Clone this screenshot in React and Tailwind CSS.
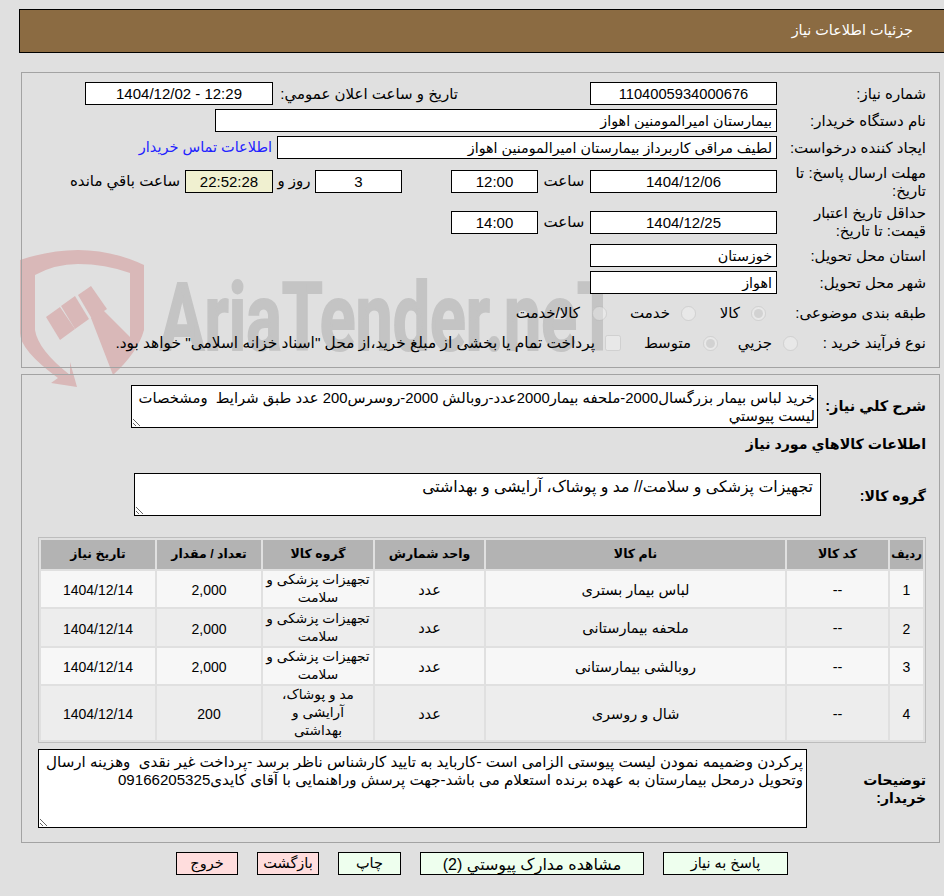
import React from 'react';

const desc = 'خريد لباس بيمار بزرگسال2000-ملحفه بيمار2000عدد-روبالش 2000-روسرس200 عدد طبق شرايط  ومشخصات ليست پيوستي';
const group = 'تجهیزات پزشکی و سلامت// مد و پوشاک، آرایشی و بهداشتی';
const notes = 'پرکردن وضمیمه نمودن لیست پیوستی الزامی است -کارباید به تایید کارشناس ناظر برسد -پرداخت غیر نقدی  وهزینه ارسال وتحویل درمحل بیمارستان به عهده برنده استعلام می باشد-جهت پرسش وراهنمایی با آقای کایدی09166205325';

const items = [
  { id: 1, name: 'لباس بیمار بستری', group: 'تجهیزات پزشکی و\nسلامت', qty: '2,000', h: 'h-[36px]' },
  { id: 2, name: 'ملحفه بیمارستانی', group: 'تجهیزات پزشکی و\nسلامت', qty: '2,000', h: 'h-[37px]' },
  { id: 3, name: 'روبالشی بیمارستانی', group: 'تجهیزات پزشکی و\nسلامت', qty: '2,000', h: 'h-[36px]' },
  { id: 4, name: 'شال و روسری', group: 'مد و پوشاک،\nآرایشی و\nبهداشتی', qty: '200', h: 'h-[54px]' },
];

const Label = ({ children }) => (
  <div className="w-[149px] flex-none pl-2 leading-[18px]">{children}</div>
);

const Field = ({ value, className = 'w-[187px]', center = true, mono = true }) => (
  <input
    readOnly
    value={value}
    className={`h-[23px] flex-none border border-black bg-white px-1 outline-none ${center ? 'text-center' : 'text-right'} ${mono ? 'text-[15px]' : 'text-[14.3px]'} ${className}`}
  />
);

const Radio = ({ checked }) => (
  <input type="radio" disabled checked={!!checked} readOnly className="m-0 h-[15px] w-[15px] flex-none opacity-60" />
);

const Button = ({ children, className }) => (
  <button className={`h-[23px] flex-none border border-black ${className}`}>{children}</button>
);

const Watermark = () => (
  <svg className="absolute left-0 top-0 pointer-events-none [direction:ltr]" width="944" height="896" viewBox="0 0 944 896">
    <path
      fill="#d9b8b8"
      fillRule="evenodd"
      d="M20 260 Q50 250 78 250 Q112 250 144 265 L144 330 Q138 352 113 375 L91 318 L103 310 L130 337 L130 273 Q105 264 78 264 Q55 264 35 275 L35 330 Q38 350 70 375 L70 362 L77 387 L51 383 L58 378 Q20 350 20 333 Z"
    />
    <polygon fill="#d9b8b8" points="46,317 60,307 75,329 60,340" />
    <polygon fill="#d9b8b8" points="61,306 75,296 89,319 75,329" />
    <polygon fill="#d9b8b8" points="78,295 91,286 107,309 92,319" />
    <text
      x="160"
      y="350"
      textLength="458"
      lengthAdjust="spacingAndGlyphs"
      fontFamily="Roboto, sans-serif"
      fontWeight="700"
      fontSize="95"
      fill="#c4c4c4"
      stroke="#c4c4c4"
      strokeWidth="2"
    >
      AriaTender.neT
    </text>
  </svg>
);

const App = () => {
  return (
    <div dir="rtl" className="relative h-[896px] w-[944px] overflow-hidden bg-[#e0e0e0] font-['Liberation_Sans','DejaVu_Sans',sans-serif] text-[15px] text-black">
      <Watermark />

      <div className="relative">
        {/* Header */}
        <div className="ml-[19px] mt-[9px] flex h-[44px] items-center border border-r-0 border-black bg-[#8b6b42] pr-[31px] text-[14.4px] text-white">
          جزئیات اطلاعات نیاز
        </div>

        {/* Need details */}
        <div className="ml-[21px] mr-[4px] mt-[19px] h-[296px] border border-[#a3a3a3] pr-[13px] pt-[9px]">
          <div className="flex h-[27px] items-start">
            <div className="w-[149px] flex-none leading-[23px]">شماره نیاز:</div>
            <Field value="1104005934000676" className="w-[187px] !text-[14.7px]" />
            <div className="mr-[132px] w-[181px] flex-none leading-[23px]">تاريخ و ساعت اعلان عمومي:</div>
            <Field value="12:29 - 1404/12/02" className="mr-[4px] w-[188px]" />
          </div>
          <div className="flex h-[27px] items-start">
            <div className="w-[149px] flex-none leading-[23px]">نام دستگاه خریدار:</div>
            <Field value="بیمارستان امیرالمومنین اهواز" center={false} mono={false} className="w-[562px]" />
          </div>
          <div className="flex h-[27px] items-start">
            <div className="w-[149px] flex-none leading-[23px]">ایجاد کننده درخواست:</div>
            <Field value="لطیف مراقی کاربرداز بیمارستان امیرالمومنین اهواز" center={false} mono={false} className="w-[500px]" />
            <a className="mr-[5px] text-[14.5px] leading-[23px] text-[#2222ff]">اطلاعات تماس خریدار</a>
          </div>
          <div className="flex h-[37px] items-center">
            <Label>مهلت ارسال پاسخ: تا تاریخ:</Label>
            <Field value="1404/12/06" />
            <div className="w-[52px] flex-none text-center">ساعت</div>
            <Field value="12:00" className="w-[87px]" />
            <Field value="3" className="mr-[49px] w-[87px]" />
            <div className="w-[42px] flex-none text-center">روز و</div>
            <Field value="22:52:28" className="w-[88px] !bg-[#f0f0d0]" />
            <div className="mr-[5px] flex-none">ساعت باقي مانده</div>
          </div>
          <div className="flex h-[44px] items-center">
            <Label>حداقل تاریخ اعتبار قیمت: تا تاریخ:</Label>
            <Field value="1404/12/25" />
            <div className="w-[52px] flex-none text-center">ساعت</div>
            <Field value="14:00" className="w-[87px]" />
          </div>
          <div className="flex h-[27px] items-start">
            <div className="w-[149px] flex-none leading-[23px]">استان محل تحویل:</div>
            <Field value="خوزستان" center={false} mono={false} />
          </div>
          <div className="flex h-[27px] items-start">
            <div className="w-[149px] flex-none leading-[23px]">شهر محل تحویل:</div>
            <Field value="اهواز" center={false} mono={false} />
          </div>
          <div className="flex h-[30px] items-center">
            <div className="w-[160px] flex-none">طبقه بندی موضوعی:</div>
            <Radio checked />
            <div className="mr-[11px] w-[44px] flex-none">کالا</div>
            <Radio />
            <div className="mr-[11px] w-[63px] flex-none">خدمت</div>
            <Radio />
            <div className="mr-[12px] flex-none">کالا/خدمت</div>
          </div>
          <div className="flex h-[30px] items-center">
            <div className="w-[128px] flex-none">نوع فرآیند خرید :</div>
            <Radio />
            <div className="mr-[11px] w-[54px] flex-none">جزيي</div>
            <Radio checked />
            <div className="mr-[12px] w-[70px] flex-none">متوسط</div>
            <input type="checkbox" disabled className="m-0 h-[16px] w-[16px] flex-none opacity-60" />
            <div className="mr-[10px] flex-none text-[15.4px]">پرداخت تمام یا بخشی از مبلغ خرید،از محل "اسناد خزانه اسلامی" خواهد بود.</div>
          </div>
        </div>

        {/* Goods */}
        <div className="ml-[21px] mr-[4px] mt-[6px] h-[469px] border border-[#a3a3a3] pr-[13px] pt-[10px]">
          <div className="flex h-[43px] items-center">
            <div className="w-[108px] flex-none text-[14.5px] font-bold">شرح کلي نیاز:</div>
            <textarea
              readOnly
              value={desc}
              className="h-[43px] w-[687px] flex-none border border-black bg-white px-[2px] pb-0 pt-[3px] text-[14.8px] leading-[18px] outline-none"
            />
          </div>
          <div className="flex h-[45px] items-center pb-[12px] text-[14.2px] font-bold">اطلاعات کالاهاي مورد نیاز</div>
          <div className="flex h-[43px] items-center">
            <div className="w-[105px] flex-none pt-[3px] text-[14px] font-bold">گروه کالا:</div>
            <textarea
              readOnly
              value={group}
              className="h-[43px] w-[687px] flex-none border border-black bg-white px-[7px] py-[4px] text-[15.8px] leading-[18px] outline-none"
            />
          </div>

          {/* Items table */}
          <table className="mt-[21px] w-[888px] table-fixed border-separate border-spacing-[2px] border border-[#bdbdbd] text-center text-[14.5px]">
            <colgroup>
              <col className="w-[33px]" />
              <col className="w-[101px]" />
              <col className="w-[299px]" />
              <col className="w-[109px]" />
              <col className="w-[110px]" />
              <col className="w-[104px]" />
              <col className="w-[114px]" />
            </colgroup>
            <thead>
              <tr className="h-[29px] bg-[#b3b3b3] text-[12.5px] font-bold">
                <th className="text-[11.5px]">ردیف</th>
                <th>کد کالا</th>
                <th>نام کالا</th>
                <th>واحد شمارش</th>
                <th>گروه کالا</th>
                <th>تعداد / مقدار</th>
                <th>تاریخ نیاز</th>
              </tr>
            </thead>
            <tbody>
              {items.map((item, i) => (
                <tr key={item.id} className={`${item.h} ${i % 2 === 0 ? 'bg-[#f7f7f7]' : 'bg-[#ededed]'}`}>
                  <td className="p-0 pt-[3px] text-[14px]">{item.id}</td>
                  <td className="p-0 pt-[3px]">--</td>
                  <td className="p-0 pt-[3px]">{item.name}</td>
                  <td className="p-0 pt-[3px]">عدد</td>
                  <td className="px-[2px] py-0 text-[13.7px] leading-[18px] whitespace-pre-line">{item.group}</td>
                  <td className="p-0 pt-[3px] text-[14px]">{item.qty}</td>
                  <td className="p-0 pt-[3px] text-[14px]">1404/12/14</td>
                </tr>
              ))}
            </tbody>
          </table>

          <div className="mt-[6px] flex h-[79px] items-center">
            <div className="w-[119px] flex-none pl-[40px] text-[14px] font-bold leading-[18px]">توضیحات خریدار:</div>
            <textarea
              readOnly
              value={notes}
              className="h-[79px] w-[769px] flex-none border border-black bg-white px-[3px] py-[3px] text-[15.1px] leading-[18px] outline-none"
            />
          </div>
        </div>

        {/* Actions */}
        <div className="mt-[9px] flex gap-[19px] pr-[156px]">
          <Button className="w-[125px] bg-[#eeffee] text-[14.5px]">پاسخ به نیاز</Button>
          <Button className="w-[224px] bg-[#eeffee] text-[16px]">مشاهده مدارک پیوستي (2)</Button>
          <Button className="w-[63px] bg-[#eeffee] text-[14.5px]">چاپ</Button>
          <Button className="w-[62px] bg-[#ffdddd] text-[14.5px]">بازگشت</Button>
          <Button className="w-[62px] bg-[#ffdddd] text-[14.5px]">خروج</Button>
        </div>
      </div>
    </div>
  );
};

export default App;
